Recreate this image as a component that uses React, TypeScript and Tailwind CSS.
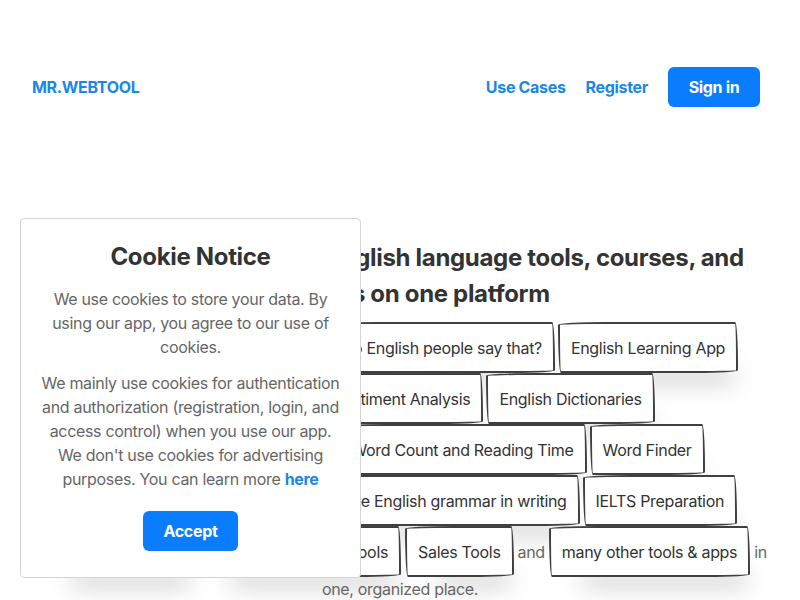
import React from 'react'

const font = { fontFamily: 'Inter, "Liberation Sans", sans-serif', letterSpacing: '-0.02em' }

function Tag({ children }: { children: React.ReactNode }) {
  return (
    <span className="inline-block shrink-0 whitespace-nowrap border-2 border-[#41403e] bg-white px-[11px] py-[11.5px] text-[16px] leading-6 text-[#333] rounded-[255px_15px_225px_15px/15px_225px_15px_255px] shadow-[15px_28px_25px_-18px_rgba(0,0,0,0.2)]">
      {children}
    </span>
  )
}

function Row({ children }: { children: React.ReactNode }) {
  return <div className="flex items-center justify-center gap-[3px]">{children}</div>
}

// leading part of a row, sits under the cookie box
function Lead({ w, children }: { w: string; children: React.ReactNode }) {
  return <div className={`flex shrink-0 items-center justify-end gap-[3px] ${w}`}>{children}</div>
}

function Header() {
  return (
    <header className="flex items-center justify-between pl-8 pr-10 pt-[67px]">
      <a className="text-[16px] font-bold text-[#1b87e6]">MR.WEBTOOL</a>
      <nav className="flex items-center">
        <a className="text-[16px] font-bold text-[#1b87e6]">Use Cases</a>
        <a className="ml-5 text-[16px] font-bold text-[#1b87e6]">Register</a>
        <button className="ml-5 h-10 w-[92px] rounded-md bg-[#0a7dff] text-[16px] font-bold text-white">
          Sign in
        </button>
      </nav>
    </header>
  )
}

function Hero() {
  return (
    <main className="mx-auto mt-[133px] w-[736px] text-center">
      <h1 className="text-[24px] font-bold leading-9 text-[#333]">
        Access a wide range of English language tools, courses, and resources on one platform
      </h1>
      <div className="mt-[10px] flex flex-col text-[16px] text-[#666]">
        <Row>
          <Lead w="w-[264px]">
            <span>Explore</span>
            <Tag>AI Writing Assistant</Tag>
          </Lead>
          <Tag>Do English people say that?</Tag>
          <Tag>English Learning App</Tag>
        </Row>
        <Row>
          <Lead w="w-[171px]">
            <Tag>Text Summarizer</Tag>
          </Lead>
          <Tag>Sentiment Analysis</Tag>
          <Tag>English Dictionaries</Tag>
        </Row>
        <Row>
          <Lead w="w-[240px]">
            <Tag>Readability Checker</Tag>
          </Lead>
          <Tag>Word Count and Reading Time</Tag>
          <Tag>Word Finder</Tag>
        </Row>
        <Row>
          <Lead w="w-[232px]">
            <Tag>Vocabulary Builder</Tag>
          </Lead>
          <Tag>Improve English grammar in writing</Tag>
          <Tag>IELTS Preparation</Tag>
        </Row>
        <div className="flex items-center justify-center gap-[4px]">
          <Lead w="w-[368px]">
            <Tag>Productivity Tools</Tag>
            <Tag>Content Marketing Tools</Tag>
          </Lead>
          <Tag>Sales Tools</Tag>
          <span>and</span>
          <Tag>many other tools &amp; apps</Tag>
          <span>in</span>
        </div>
        <div className="leading-6">one, organized place.</div>
      </div>
    </main>
  )
}

function CookieNotice() {
  return (
    <div className="fixed left-5 top-[218px] w-[341px] rounded border border-[#d4d4d4] bg-white px-5 pb-[26px] pt-[22px] text-center">
      <h2 className="text-[24px] font-bold leading-8 text-[#333]">Cookie Notice</h2>
      <p className="mt-[14px] text-[16px] leading-6 text-[#666]">
        We use cookies to store your data. By using our app, you agree to our use of cookies.
      </p>
      <p className="mt-3 text-[16px] leading-6 text-[#666]">
        We mainly use cookies for authentication and authorization (registration, login, and access
        control) when you use our app. We don't use cookies for advertising purposes. You can learn more{' '}
        <a className="font-bold text-[#1b87e6]">here</a>
      </p>
      <button className="mt-5 h-10 w-[95px] rounded-md bg-[#0a7dff] text-[16px] font-bold text-white">
        Accept
      </button>
    </div>
  )
}

export default function App() {
  return (
    <div className="min-h-[600px] bg-white" style={font}>
      <Header />
      <Hero />
      <CookieNotice />
    </div>
  )
}
